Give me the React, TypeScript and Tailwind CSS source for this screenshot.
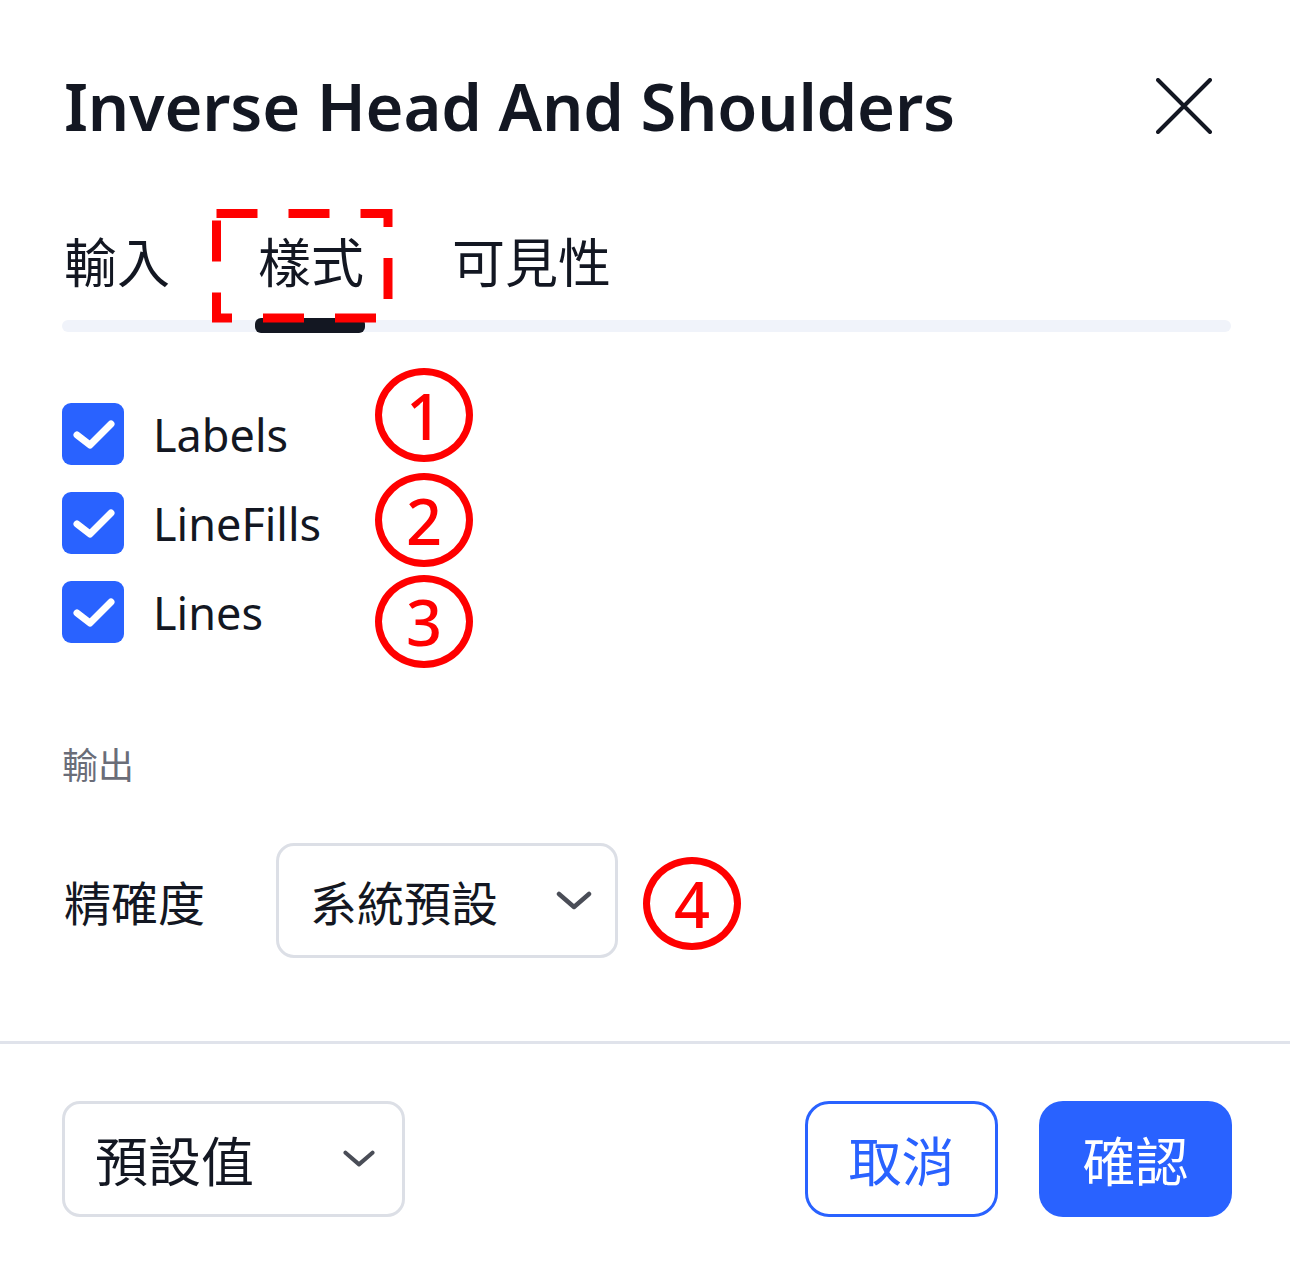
import React from "react";

// ─── Fonts ────────────────────────────────────────────────────────────────────
const LATIN = "font-['Noto_Sans','Noto_Sans_CJK_TC',sans-serif]";
const CJK = "font-['Noto_Sans_CJK_TC','Noto_Sans',sans-serif]";

function Chevron({ className }: { className?: string }) {
  return (
    <svg viewBox="0 0 36 20" className={className} fill="none">
      <path d="M3 3 L18 16 L33 3" stroke="#4a4d57" strokeWidth="4.5" strokeLinecap="round" strokeLinejoin="round" />
    </svg>
  );
}

function Check() {
  return (
    <div className="flex h-[62px] w-[62px] shrink-0 items-center justify-center rounded-[9px] bg-[#2962ff]">
      <svg viewBox="0 0 62 62" className="h-[62px] w-[62px]" fill="none">
        <path d="M15 32 L28 42 L49 21" stroke="#fff" strokeWidth="7" strokeLinecap="round" strokeLinejoin="round" />
      </svg>
    </div>
  );
}

// red annotation marks lying over the dialog
const CIRCLES = [
  { n: "1", cls: "left-[375px] top-[368px] w-[98px] h-[94px]" },
  { n: "2", cls: "left-[375px] top-[473px] w-[98px] h-[94px]" },
  { n: "3", cls: "left-[375px] top-[575px] w-[98px] h-[93px]" },
  { n: "4", cls: "left-[643px] top-[857px] w-[98px] h-[93px]" },
];

export default function App() {
  return (
    <div className={`relative h-[1269px] w-[1290px] overflow-hidden bg-white text-[#131722] ${LATIN}`}>
      <div className="pl-[62px] pr-[59px]">
        {/* Header */}
        <div className="mt-[56px] flex h-[100px] items-center justify-between">
          <h1 className="pl-[2px] text-[65px] font-semibold leading-none tracking-[-0.2px]">
            Inverse Head And Shoulders
          </h1>
          <svg viewBox="0 0 56 56" className="mr-[19px] h-[56px] w-[56px]" fill="none">
            <path d="M2 2 L54 54 M54 2 L2 54" stroke="#131722" strokeWidth="4" strokeLinecap="round" />
          </svg>
        </div>

        {/* Tabs */}
        <div className={`mt-[44px] flex h-[120px] items-center gap-[88px] pl-[2px] text-[53px] leading-none ${CJK}`}>
          <span>輸入</span>
          <span>樣式</span>
          <span>可見性</span>
        </div>
        <div className="relative h-[12px] rounded-full bg-[#f0f3fa]">
          <div className="absolute left-[193px] top-[-2px] h-[15px] w-[110px] rounded-[6px] bg-[#131722]" />
        </div>

        {/* Checkboxes */}
        <div className="mt-[71px] flex flex-col gap-[27px]">
          {["Labels", "LineFills", "Lines"].map((t) => (
            <div key={t} className="flex items-center gap-[29px]">
              <Check />
              <span className="text-[45px] leading-none">{t}</span>
            </div>
          ))}
        </div>

        {/* Output section */}
        <div className={`mt-[95px] flex h-[50px] items-center text-[36px] leading-none text-[#6a6d78] ${CJK}`}>
          輸出
        </div>

        <div className={`mt-[55px] flex items-center ${CJK}`}>
          <span className="w-[214px] pl-[2px] text-[47px] leading-none">精確度</span>
          <div className="flex h-[115px] w-[342px] items-center justify-between rounded-[18px] border-[3px] border-[#dcdfe6] pl-[31px] pr-[23px]">
            <span className="text-[47px] leading-none">系統預設</span>
            <Chevron className="h-[20px] w-[36px]" />
          </div>
        </div>
      </div>

      {/* Divider */}
      <div className="mt-[83px] h-[3px] bg-[#e0e3eb]" />

      {/* Footer */}
      <div className={`mt-[57px] flex items-center justify-between pl-[62px] pr-[58px] ${CJK}`}>
        <div className="flex h-[116px] w-[343px] items-center justify-between rounded-[18px] border-[3px] border-[#dcdfe6] pl-[30px] pr-[25px]">
          <span className="text-[53px] leading-none">預設值</span>
          <Chevron className="h-[18px] w-[36px]" />
        </div>
        <div className="flex gap-[41px]">
          <button className="flex h-[116px] w-[193px] items-center justify-center rounded-[24px] border-[3px] border-[#2962ff] text-[53px] leading-none text-[#2962ff]">
            取消
          </button>
          <button className="flex h-[116px] w-[193px] items-center justify-center rounded-[24px] bg-[#2962ff] text-[53px] leading-none text-white">
            確認
          </button>
        </div>
      </div>

      {/* Annotations */}
      <svg className="pointer-events-none absolute left-0 top-0" width="1290" height="1269" fill="none">
        <rect x="216.5" y="213.5" width="171.5" height="104.5" stroke="#ff0000" strokeWidth="9" strokeDasharray="41 31" />
      </svg>
      {CIRCLES.map((c) => (
        <div
          key={c.n}
          className={`absolute flex items-center justify-center rounded-[50%] border-[7px] border-[#ff0000] text-[63px] font-medium leading-none text-[#ff0000] ${c.cls}`}
        >
          {c.n}
        </div>
      ))}
    </div>
  );
}
